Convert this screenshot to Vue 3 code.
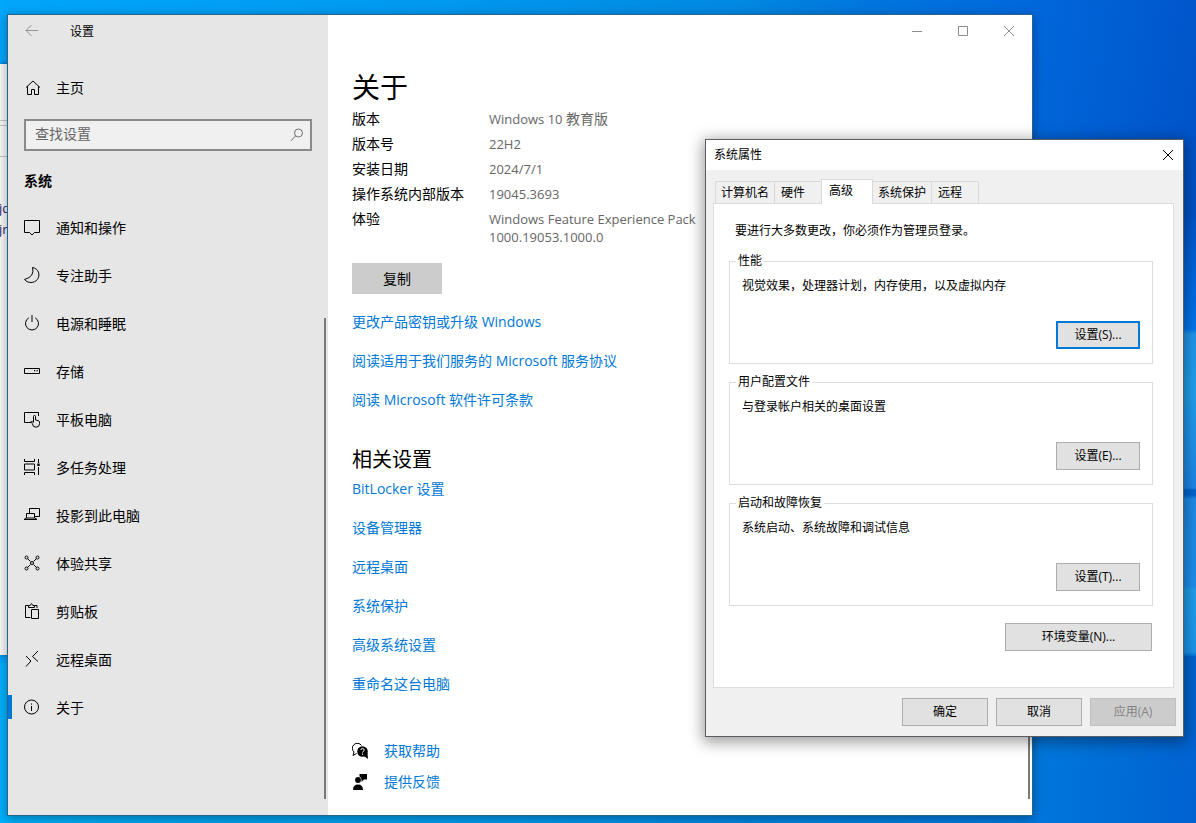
<script setup>
import { ref } from 'vue'

const search = ref('')

const nav = [
  { id: 'notify', label: '通知和操作' },
  { id: 'focus', label: '专注助手' },
  { id: 'power', label: '电源和睡眠' },
  { id: 'storage', label: '存储' },
  { id: 'tablet', label: '平板电脑' },
  { id: 'multi', label: '多任务处理' },
  { id: 'project', label: '投影到此电脑' },
  { id: 'share', label: '体验共享' },
  { id: 'clipboard', label: '剪贴板' },
  { id: 'remote', label: '远程桌面' },
  { id: 'about', label: '关于' }
]
const current = ref('about')

const specs = [
  { name: '版本', value: 'Windows 10 ', edition: '教育版' },
  { name: '版本号', value: '22H2' },
  { name: '安装日期', value: '2024/7/1' },
  { name: '操作系统内部版本', value: '19045.3693' },
  { name: '体验', value: 'Windows Feature Experience Pack 1000.19053.1000.0' }
]

const docs = ['更改产品密钥或升级 Windows', '阅读适用于我们服务的 Microsoft 服务协议', '阅读 Microsoft 软件许可条款']
const related = ['BitLocker 设置', '设备管理器', '远程桌面', '系统保护', '高级系统设置', '重命名这台电脑']

const tabs = ['计算机名', '硬件', '高级', '系统保护', '远程']
const activeTab = ref('高级')

const groups = [
  { title: '性能', desc: '视觉效果，处理器计划，内存使用，以及虚拟内存', button: '设置(S)...' },
  { title: '用户配置文件', desc: '与登录帐户相关的桌面设置', button: '设置(E)...' },
  { title: '启动和故障恢复', desc: '系统启动、系统故障和调试信息', button: '设置(T)...' }
]
</script>

<template>
  <div class="desktop">
    <div class="beam"></div>

    <div class="backwin">
      <div class="bar1"></div>
      <div class="bar2"></div>
      <p class="frag">jd</p>
      <p class="frag">jr</p>
    </div>

    <section class="settings">
      <aside class="side">
        <header class="side-title">
          <button class="back" aria-label="返回">
            <svg width="14" height="14" viewBox="0 0 14 14"><path d="M13 6.500H1M6.500 1L1 6.500 6.500 12" /></svg>
          </button>
          <span>设置</span>
        </header>

        <a class="home" href="#">
          <svg width="16" height="16" viewBox="0 0 16 16"><path d="M1 8.500L8 2 15 8.500M2.500 7.200V15.500h4V10.500h3v5h4V7.200" /></svg>
          <span>主页</span>
        </a>

        <div class="search">
          <input v-model="search" type="text" placeholder="查找设置" aria-label="查找设置" />
          <svg width="14" height="14" viewBox="0 0 14 14"><circle cx="8.500" cy="5" r="4" /><path d="M5.500 8L1 12.800" /></svg>
        </div>

        <h3 class="cat">系统</h3>

        <nav class="nav">
          <a v-for="n in nav" :key="n.id" href="#" :class="{ on: n.id === current }" @click.prevent="current = n.id">
            <svg width="18" height="18" viewBox="0 0 18 18">
              <g v-if="n.id === 'notify'"><path d="M1.500 2.500h15v12h-5L9 17l-2.500-2.500h-5z" /></g>
              <g v-else-if="n.id === 'focus'"><path d="M9.500 1.500Q12 10.500 1.500 13.500C5 17.500 11 17.500 14.300 13.500 17.800 9 15.500 2.500 9.500 1.500z" /></g>
              <g v-else-if="n.id === 'power'"><path d="M5.800 3.800a6.500 6.500 0 1 0 6.400 0M9 1v7" /></g>
              <g v-else-if="n.id === 'storage'"><path d="M1.500 6.500h15v5h-15z" /><path class="fill" d="M11 8h1.200v1.200H11zM13.500 8h1.200v1.200h-1.200z" /></g>
              <g v-else-if="n.id === 'tablet'">
                <path d="M8 12.500H1.500v-10h14V6" />
                <path d="M10.500 12V6.500a1 1 0 0 1 2 0V10l3 .700q1 .300 1 1.500v1.500a3.500 3.500 0 0 1-7 0L7.700 12q.800-1.200 2.800.500" />
              </g>
              <g v-else-if="n.id === 'multi'"><path d="M1.500 1v2.500h10V1M1.500 17v-2.500h10V17M1.500 6h10v6h-10zM15.500 1v4M15.500 9v8" /><path class="fill" d="M14.300 5.600h2.400V8h-2.400z" /></g>
              <g v-else-if="n.id === 'project'"><path d="M6.500 7V2.500h10v8h-5M3.500 12V7.500h8V12M1 13.500L3 12h9l2 1.500z" /></g>
              <g v-else-if="n.id === 'share'">
                <path d="M4.500 4.500l3 3M13.500 4.500l-3 3M4.500 13.500l3-3M13.500 13.500l-3-3" />
                <circle cx="3.500" cy="3.500" r="1.500" /><circle cx="14.500" cy="3.500" r="1.500" /><circle cx="3.500" cy="14.500" r="1.500" /><circle cx="14.500" cy="14.500" r="1.500" /><circle cx="9" cy="9" r="1.500" />
              </g>
              <g v-else-if="n.id === 'clipboard'"><path d="M7.500 15.500h-5v-12H5M11.500 3.500h2.500V6M5.500 5.500v-2h1.700q1.300-3.500 2.600 0H11.500v2zM8.500 7.500h7v9h-7z" /></g>
              <g v-else-if="n.id === 'remote'"><path d="M3 6l5 5-5 5.500M15 1L9.500 6.500 15 11.500" /></g>
              <g v-else><circle cx="8.500" cy="9" r="7" /><path d="M8.500 8v5M8.500 5.500v1.200" /></g>
            </svg>
            <span>{{ n.label }}</span>
          </a>
        </nav>
        <div class="scroll"></div>
      </aside>

      <main class="main">
        <div class="controls">
          <button aria-label="最小化"><svg width="12" height="12" viewBox="0 0 12 12"><path d="M1 6.500h10" /></svg></button>
          <button aria-label="最大化"><svg width="12" height="12" viewBox="0 0 12 12"><path d="M1.500 1.500h9v9h-9z" /></svg></button>
          <button aria-label="关闭"><svg width="12" height="12" viewBox="0 0 12 12"><path d="M1 1l10 10M11 1L1 11" /></svg></button>
        </div>

        <div class="content">
          <h1>关于</h1>
          <dl class="specs">
            <div v-for="s in specs" :key="s.name">
              <dt>{{ s.name }}</dt>
              <dd>{{ s.value }}<span v-if="s.edition">{{ s.edition }}</span></dd>
            </div>
          </dl>
          <button class="copy">复制</button>

          <div class="links">
            <a v-for="d in docs" :key="d" href="#">{{ d }}</a>
          </div>

          <h2>相关设置</h2>
          <div class="links related">
            <a v-for="r in related" :key="r" href="#">{{ r }}</a>
          </div>

          <div class="help">
            <a href="#">
              <svg width="16" height="16" viewBox="0 0 16 16">
                <path class="line" d="M4.500 10.500L1 12.500l1-3.500A5 5 0 1 1 9.500 2.500" />
                <circle cx="10.500" cy="8.500" r="5.300" /><path d="M12 13l4 3-.500-6z" />
                <path class="mark" d="M8.800 7q.200-1.600 1.700-1.600T12.200 7q0 .800-1 1.400-.700.500-.700 1.200M10.500 10.600v1.200" />
              </svg>
              <span>获取帮助</span>
            </a>
            <a href="#">
              <svg width="16" height="16" viewBox="0 0 16 16">
                <circle cx="6" cy="6" r="2.900" /><path d="M1 16q0-5.500 5-5.500T11 16zM7.500 0H15v5.500h-3L9.500 8V5.500L8.500 3.200 7.500 2.500z" />
              </svg>
              <span>提供反馈</span>
            </a>
          </div>
        </div>
        <div class="scroll"></div>
      </main>
    </section>

    <section class="dialog" role="dialog" aria-label="系统属性">
      <header class="dlg-title">
        <span>系统属性</span>
        <button aria-label="关闭"><svg width="12" height="12" viewBox="0 0 12 12"><path d="M1 1l10 10M11 1L1 11" /></svg></button>
      </header>
      <div class="dlg-body">
        <div class="tabs" role="tablist">
          <button v-for="t in tabs" :key="t" role="tab" :aria-selected="t === activeTab" :class="{ on: t === activeTab, wide: t.length > 3 }" @click="activeTab = t">{{ t }}</button>
        </div>
        <div class="panel">
          <p class="note">要进行大多数更改，你必须作为管理员登录。</p>
          <fieldset v-for="(g, i) in groups" :key="g.title">
            <legend>{{ g.title }}</legend>
            <p>{{ g.desc }}</p>
            <button class="btn" :class="{ focus: i === 0 }">{{ g.button }}</button>
          </fieldset>
          <button class="btn env">环境变量(N)...</button>
        </div>
        <footer class="dlg-foot">
          <button class="btn">确定</button>
          <button class="btn">取消</button>
          <button class="btn" disabled>应用(A)</button>
        </footer>
      </div>
    </section>
  </div>
</template>

<style>
body {
  margin: 0;
}
</style>

<style scoped>
.desktop {
  position: relative;
  min-height: 100vh;
  overflow: hidden;
  font-family: "Open Sans", "Noto Sans CJK SC", sans-serif;
  font-size: 14px;
  color: #000;
  background: linear-gradient(94deg, #00a6fa 0%, #0099f0 35%, #0084de 66%, #0078dc 86%, #0062d0 100%);
}
.desktop * {
  box-sizing: border-box;
}
.desktop::before {
  content: "";
  position: absolute;
  inset: 0;
  background:
    linear-gradient(90deg, #00affa 0 1%, #00a0ec 20%, transparent 60%) bottom / 100% 160px no-repeat,
    linear-gradient(100deg, transparent 60%, #006ade 82%, #0052c8 100%) top / 100% 220px no-repeat;
}
.beam {
  position: absolute;
  top: 220px;
  right: 0;
  width: 20px;
  height: 436px;
  background: linear-gradient(#0056cc 0, #0076f0 109px, #2098ee 114px, #20a2f0 170px, #1e88ea 268px, #0066d2 270px, #0066d2 275px, #1e8cea 279px, #1e90ee 366px, #20a0f0 370px, #1c98ee 432px, #0078dc 436px);
}
h1, h2, h3, p, dl, dd {
  margin: 0;
}
button {
  padding: 0;
  font: inherit;
  color: inherit;
  border: 0;
  background: none;
}
a {
  color: #0078d7;
  text-decoration: none;
}
svg {
  display: block;
  flex: none;
  fill: none;
  stroke: #000;
}

.backwin {
  position: absolute;
  top: 64px;
  left: 0;
  width: 20px;
  height: 591px;
  padding-top: 56px;
  background: #f7f7f7;
  box-shadow: 0 0 4px #0050a0;
}
.bar1 {
  height: 6px;
  border: solid #c4c4c4;
  border-width: 1px 0;
}
.bar2 {
  height: 31px;
  margin-bottom: 41px;
  border-bottom: 1px solid #c4c4c4;
}
.frag {
  margin-left: -1px;
  font-size: 13px;
  line-height: 21px;
  color: #2a1a66;
}

.settings {
  position: absolute;
  top: 15px;
  right: 164px;
  bottom: 8px;
  left: 8px;
  display: grid;
  grid-template-columns: 320px 1fr;
  background: #fff;
  box-shadow: 0 0 0 1px #28648c, 0 2px 10px 1px rgba(0, 0, 0, 0.35);
}
.side {
  position: relative;
  background: #e6e6e6;
}
.side-title {
  display: flex;
  align-items: center;
  height: 32px;
  font-size: 12px;
}
.back {
  width: 62px;
  padding-left: 17px;
}
.back svg {
  stroke: #949494;
}
.home {
  display: flex;
  align-items: center;
  gap: 15px;
  height: 48px;
  margin-top: 16px;
  padding-left: 17px;
  color: #000;
}
.search {
  display: flex;
  align-items: center;
  height: 32px;
  margin: 8px 16px 0;
  padding: 0 6px 0 9px;
  border: 2px solid #8a8a8a;
  background: #f0f0f0;
}
.search input {
  flex: 1;
  min-width: 0;
  padding: 0 0 3px;
  border: 0;
  outline: 0;
  font: inherit;
  background: none;
}
.search input::placeholder {
  color: #666;
  opacity: 1;
}
.search svg {
  stroke: #707070;
}
.cat {
  padding: 20px 16px 12px;
  font-size: 14px;
  line-height: 20px;
  font-weight: 700;
}
.nav a {
  display: flex;
  align-items: center;
  gap: 15px;
  height: 48px;
  padding-left: 15px;
  color: #000;
}
.nav a.on {
  background: linear-gradient(#0078d7, #0078d7) 0 12px / 4px 24px no-repeat;
}
.nav svg .fill {
  fill: #000;
  stroke: none;
}
.scroll {
  position: absolute;
  top: 303px;
  right: 2px;
  bottom: 16px;
  width: 2px;
  background: #7a7a7a;
}

.main {
  position: relative;
}
.controls {
  display: flex;
  justify-content: flex-end;
}
.controls button {
  display: grid;
  place-items: center;
  width: 46px;
  height: 32px;
}
.controls svg {
  stroke: #8c8c8c;
}
.content {
  padding: 20px 24px 0;
}
h1 {
  font-size: 28px;
  line-height: 40px;
  font-weight: 400;
}
.specs div {
  display: grid;
  grid-template-columns: 137px 220px;
  padding: 3px 0 4px;
  line-height: 18px;
}
.specs dd {
  font-size: 13px;
  color: #666;
}
.specs dd span {
  font-size: 14px;
}
.copy {
  width: 90px;
  height: 31px;
  margin-top: 13px;
  padding-bottom: 2px;
  background: #ccc;
}
.links {
  display: flex;
  flex-direction: column;
  align-items: flex-start;
  gap: 19px;
  margin-top: 18px;
  line-height: 20px;
}
h2 {
  margin-top: 35px;
  font-size: 20px;
  line-height: 30px;
  font-weight: 400;
}
.related {
  margin-top: 4px;
}
.help {
  display: flex;
  flex-direction: column;
  align-items: flex-start;
  gap: 11px;
  margin-top: 47px;
  line-height: 20px;
}
.help a {
  display: flex;
  align-items: center;
  gap: 16px;
}
.help svg {
  fill: #000;
  stroke: none;
}
.help .line {
  fill: none;
  stroke: #000;
}
.help .mark {
  fill: none;
  stroke: #fff;
}

.dialog {
  position: absolute;
  top: 139px;
  right: 12px;
  width: 479px;
  border: 1px solid #5a5f66;
  font-size: 12px;
  line-height: 16px;
  background: #f0f0f0;
  box-shadow: 0 3px 14px 2px rgba(0, 0, 0, 0.4);
}
.dlg-title {
  display: flex;
  align-items: center;
  justify-content: space-between;
  height: 30px;
  padding: 0 9px 0 8px;
  background: #fff;
}
.dlg-body {
  padding: 9px 7px 10px;
}
.tabs {
  display: flex;
  align-items: flex-end;
  padding-left: 2px;
}
.tabs button {
  width: 48px;
  height: 22px;
  margin-right: -1px;
  padding-left: 6px;
  border: 1px solid #d9d9d9;
  border-bottom: 0;
  text-align: left;
}
.tabs .wide {
  width: 60px;
  padding-left: 5px;
}
.tabs .on {
  position: relative;
  z-index: 1;
  width: 52px;
  height: 25px;
  margin-bottom: -1px;
  padding: 0 0 3px 7px;
  background: #fff;
}
.panel {
  display: flex;
  flex-direction: column;
  margin-right: 2px;
  padding: 19px 20px 36px 15px;
  border: 1px solid #dcdcdc;
  background: #fff;
}
.note {
  padding-left: 6px;
}
fieldset {
  display: flex;
  flex-direction: column;
  min-width: 0;
  margin: 14px 0 0;
  padding: 9px 12px 14px;
  border: 1px solid #dcdcdc;
}
fieldset + fieldset {
  margin-top: 10px;
}
legend {
  margin-left: -6px;
  padding: 0 2px;
}
.btn {
  width: 86px;
  height: 28px;
  border: 1px solid #adadad;
  background: #e1e1e1;
}
fieldset .btn {
  align-self: flex-end;
  width: 84px;
  margin-top: 27px;
}
.btn.focus {
  border: 2px solid #0078d7;
}
.btn.env {
  align-self: flex-end;
  width: 147px;
  margin: 17px 1px 0 0;
}
.btn:disabled {
  color: #838383;
  border-color: #bfbfbf;
  background: #ccc;
}
.dlg-foot {
  display: flex;
  justify-content: flex-end;
  gap: 8px;
  margin-top: 10px;
}
</style>
